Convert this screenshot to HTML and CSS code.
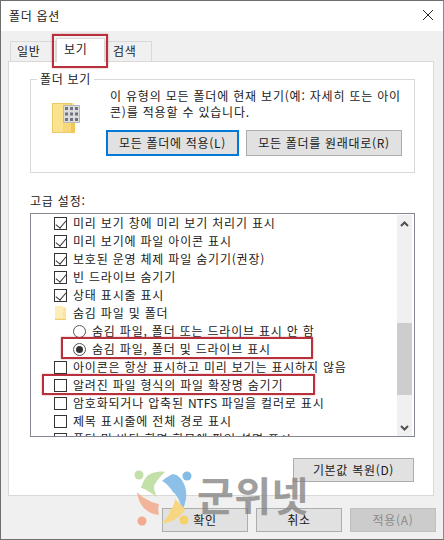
FILE: index.html
```html
<!DOCTYPE html>
<html lang="ko">
<head>
    <meta charset="UTF-8">
    <meta name="viewport" content="width=device-width, initial-scale=1.0">
    <title>폴더 옵션</title>
    <link rel="stylesheet" href="styles.css">
</head>
<body>
    <div class="dialog">
        <!-- Title bar -->
        <header class="titlebar">
            <span class="title">폴더 옵션</span>
            <svg class="close" width="12" height="12" viewBox="0 0 12 12"><path d="M1 1L11 11M11 1L1 11" stroke="#222" stroke-width="1" fill="none"/></svg>
        </header>

        <div class="content">
            <!-- Tabs -->
            <div class="tabs">
                <div class="tab first">일반</div>
                <div class="tab active">보기</div>
                <div class="tab last">검색</div>
            </div>

            <div class="panel">
                <!-- Folder views -->
                <div class="group">
                    <div class="group-title">폴더 보기</div>
                    <svg class="folder-icon" width="28" height="32" viewBox="0 0 28 32">
                        <path d="M0 0H22V30H0Z" fill="#fbe28e"/>
                        <path d="M0.500 0.500H19.500V29.500H0.500Z" fill="none" stroke="#ecc967"/>
                        <path d="M11 1H19V29H11Z" fill="#f7d877"/>
                        <path d="M19 2H23V30H11V29H19Z" fill="#eec75f"/>
                        <path d="M11.500 2.500H27.500V19.500H11.500Z" fill="#dcdcdc" stroke="#b9b9b9"/>
                        <path d="M13 4h3v3h-3zM18 4h3v3h-3zM23 4h3v3h-3zM13 9.500h3v3h-3zM18 9.500h3v3h-3zM23 9.500h3v3h-3zM13 15h3v3h-3zM18 15h3v3h-3zM23 15h3v3h-3z" fill="#6f7480"/>
                    </svg>
                    <div class="group-body">
                        <p class="group-text">이 유형의 모든 폴더에 현재 보기(예: 자세히 또는 아이콘)를 적용할 수 있습니다.</p>
                        <div class="group-buttons">
                            <button class="btn default">모든 폴더에 적용(L)</button>
                            <button class="btn reset">모든 폴더를 원래대로(R)</button>
                        </div>
                    </div>
                </div>

                <div class="advanced-label">고급 설정:</div>

                <!-- Advanced settings list -->
                <div class="list">
                    <div class="rows">
                        <div class="row"><span class="check on"></span>미리 보기 창에 미리 보기 처리기 표시</div>
                        <div class="row"><span class="check on"></span>미리 보기에 파일 아이콘 표시</div>
                        <div class="row"><span class="check on"></span>보호된 운영 체제 파일 숨기기(권장)</div>
                        <div class="row"><span class="check on"></span>빈 드라이브 숨기기</div>
                        <div class="row"><span class="check on"></span>상태 표시줄 표시</div>
                        <div class="row">
                            <svg class="row-folder" width="13" height="16" viewBox="0 0 13 16"><path d="M1 1H9V2.500H12V15H1Z" fill="#fbe59a"/><path d="M1 1H9V13H1Z" fill="#fdeeb8"/><path d="M1 14H12V15H1Z" fill="#efd071"/></svg>숨김 파일 및 폴더
                        </div>
                        <div class="row sub"><span class="radio"></span>숨김 파일, 폴더 또는 드라이브 표시 안 함</div>
                        <div class="row sub"><span class="radio on"></span>숨김 파일, 폴더 및 드라이브 표시</div>
                        <div class="row"><span class="check"></span>아이콘은 항상 표시하고 미리 보기는 표시하지 않음</div>
                        <div class="row"><span class="check"></span>알려진 파일 형식의 파일 확장명 숨기기</div>
                        <div class="row"><span class="check"></span><span>암호화되거나 압축된 <span class="latin">NTFS</span> 파일을 컬러로 표시</span></div>
                        <div class="row"><span class="check"></span>제목 표시줄에 전체 경로 표시</div>
                        <div class="row"><span class="check"></span>폴더 및 바탕 화면 항목에 팝업 설명 표시</div>
                    </div>
                    <div class="scrollbar">
                        <svg width="15" height="17" viewBox="0 0 15 17"><path d="M4 11L7.500 7.500L11 11" stroke="#505050" stroke-width="2" fill="none"/></svg>
                        <div class="thumb"></div>
                        <svg width="15" height="17" viewBox="0 0 15 17"><path d="M4 7L7.500 10.500L11 7" stroke="#505050" stroke-width="2" fill="none"/></svg>
                    </div>
                </div>

                <div class="restore-row">
                    <button class="btn restore">기본값 복원(D)</button>
                </div>
            </div>

            <!-- Dialog buttons -->
            <div class="footer">
                <button class="btn action">확인</button>
                <button class="btn action">취소</button>
                <button class="btn action disabled">적용(A)</button>
            </div>
        </div>

        <!-- Red annotation boxes -->
        <div class="mark mark-tab"></div>
        <div class="mark mark-radio"></div>
        <div class="mark mark-check"></div>

        <!-- Watermark -->
        <div class="watermark">
            <svg width="58" height="60" viewBox="0 0 58 60">
                <circle cx="5" cy="6" r="4.500" fill="#c3e0aa"/>
                <circle cx="53" cy="7" r="4.500" fill="#82bce6"/>
                <circle cx="8" cy="52" r="4.500" fill="#f2ab8e"/>
                <circle cx="50" cy="51" r="4.500" fill="#f6d06a"/>
                <path d="M7 19C9 12 12 7 16 5C21 3 26 2 31 3C26 8 22 12 20 17C20 21 21 24 23 28C17 24 12 20 7 19Z" fill="#c3e0a8"/>
                <path d="M28 12C33 8 36 6 39 5C44 6 47 9 49 13C53 20 54 30 48 42C47 34 44 27 39 23C36 18 32 14 28 12Z" fill="#8cc0e6"/>
                <path d="M3 23C9 29 16 33 25 35C24 38 24 42 25 46C14 45 5 38 3 23Z" fill="#f2b49a"/>
                <path d="M41 30C44 33 49 37 51 41C45 49 36 55 27 54C33 50 36 44 36 42C39 38 41 34 41 30Z" fill="#f6d680"/>
            </svg>
            <span class="watermark-text">군위넷</span>
        </div>
    </div>
</body>
</html>
```

FILE: styles.css
```css
/* Basic Styling */
* {
    box-sizing: border-box;
    margin: 0;
    padding: 0;
}
body {
    font-family: "Noto Sans CJK KR", "Noto Sans", sans-serif;
    font-size: 12px;
    color: #1a1a1a;
    background-color: #f0f0f0;
    overflow: hidden;
}

.dialog {
    position: relative;
    width: 444px;
    height: 540px;
    border: 1px solid #6e6e6e;
    border-right-color: #8a8a8a;
    background-color: #f0f0f0;
    display: flex;
    flex-direction: column;
}

/* Title bar */
.titlebar {
    height: 30px;
    background-color: #fff;
    display: flex;
    align-items: center;
    justify-content: space-between;
    padding: 0 9px 2px 8px;
    flex-shrink: 0;
}

.title {
    letter-spacing: 0.7px;
}

.content {
    flex: 1;
    padding: 10px 7px 0 7px;
    display: flex;
    flex-direction: column;
}

/* Tabs */
.tabs {
    display: flex;
    height: 20px;
    padding-left: 2px;
}

.tab {
    height: 20px;
    border: 1px solid #d9d9d9;
    border-bottom: none;
    background-color: #f0f0f0;
    line-height: 18px;
    letter-spacing: 0.8px;
}

.tab.first {
    width: 46px;
    padding-left: 6px;
}

.tab.active {
    position: relative;
    z-index: 1;
    width: 49px;
    height: 24px;
    margin-top: -3px;
    padding-left: 7px;
    line-height: 20px;
    background-color: #fff;
}

.tab.last {
    width: 47px;
    padding-left: 7px;
}

/* Panel */
.panel {
    height: 435px;
    margin-right: 2px;
    background-color: #fff;
    border: 1px solid #d9d9d9;
    padding: 17px 18px 0 21px;
}

.group {
    position: relative;
    height: 94px;
    border: 1px solid #d9d9d9;
    display: flex;
    padding: 8px 0 0 21px;
}

.group-title {
    position: absolute;
    top: -9px;
    left: 6px;
    padding: 0 3px;
    background-color: #fff;
    line-height: 16px;
    letter-spacing: 0.7px;
}

.folder-icon {
    margin-top: 15px;
    flex-shrink: 0;
}

.group-body {
    margin-left: 30px;
    width: 300px;
}

.group-text {
    line-height: 16px;
    letter-spacing: 0.8px;
    width: 296px;
}

.group-buttons {
    display: flex;
    gap: 7px;
    margin-top: 10px;
    margin-left: -4px;
}

/* Buttons */
.btn {
    font-family: inherit;
    font-size: 12px;
    color: #1a1a1a;
    letter-spacing: 0.7px;
    line-height: 14px;
    padding-bottom: 1px;
    background-color: #e1e1e1;
    border: 1px solid #adadad;
}

.btn.default {
    width: 133px;
    height: 26px;
    border: 2px solid #0078d7;
}

.btn.reset {
    width: 156px;
    height: 26px;
}

.advanced-label {
    margin-top: 20px;
    line-height: 16px;
    height: 18px;
    letter-spacing: 0.8px;
}

/* List */
.list {
    height: 224px;
    margin-top: 2px;
    border: 1px solid #828790;
    display: flex;
    overflow: hidden;
}

.rows {
    flex: 1;
    overflow: hidden;
    padding-left: 23px;
}

.row {
    height: 18px;
    display: flex;
    align-items: center;
    gap: 6px;
    white-space: nowrap;
    letter-spacing: 0.8px;
    line-height: 16px;
}

.row.sub {
    padding-left: 19px;
}

.latin {
    letter-spacing: 0;
}

.check {
    position: relative;
    width: 13px;
    height: 13px;
    border: 1px solid #333;
    background-color: #fff;
    flex-shrink: 0;
}

.check.on::after {
    content: "";
    position: absolute;
    left: 3px;
    top: 0;
    width: 5px;
    height: 9px;
    border: solid #333;
    border-width: 0 1px 1px 0;
    transform: rotate(40deg);
}

.radio {
    position: relative;
    width: 13px;
    height: 13px;
    border: 1px solid #555;
    border-radius: 50%;
    flex-shrink: 0;
}

.radio.on::after {
    content: "";
    position: absolute;
    left: 2px;
    top: 2px;
    width: 7px;
    height: 7px;
    border-radius: 50%;
    background-color: #333;
}

.row-folder {
    flex-shrink: 0;
}

.scrollbar {
    position: relative;
    width: 15px;
    margin: 1px 2px 0 0;
    background-color: #f0f0f0;
    display: flex;
    flex-direction: column;
    justify-content: space-between;
    flex-shrink: 0;
}

.thumb {
    position: absolute;
    top: 108px;
    left: 0;
    width: 15px;
    height: 72px;
    background-color: #cdcdcd;
}

.restore-row {
    display: flex;
    justify-content: flex-end;
    margin-top: 21px;
    padding-right: 1px;
}

.btn.restore {
    width: 121px;
    height: 24px;
}

/* Footer */
.footer {
    display: flex;
    justify-content: flex-end;
    gap: 8px;
    margin-top: 12px;
}

.btn.action {
    width: 86px;
    height: 24px;
}

.btn.disabled {
    color: #8a8a8a;
    background-color: #ccc;
    border-color: #bfbfbf;
}

/* Red annotation boxes */
.mark {
    position: absolute;
    border: 2px solid #b8303c;
    box-shadow: 0 0 2px rgba(184, 48, 60, 0.45);
}

.mark-tab {
    left: 51px;
    top: 33px;
    width: 56px;
    height: 34px;
}

.mark-radio {
    left: 60px;
    top: 336px;
    width: 252px;
    height: 22px;
}

.mark-check {
    left: 41px;
    top: 373px;
    width: 273px;
    height: 21px;
}

/* Watermark */
.watermark {
    position: absolute;
    left: 133px;
    top: 468px;
    display: flex;
    align-items: flex-start;
    gap: 5px;
    pointer-events: none;
}

.watermark-text {
    font-size: 40px;
    font-weight: 700;
    line-height: 50px;
    letter-spacing: 0.5px;
    color: #808080;
    opacity: 0.75;
}
```
